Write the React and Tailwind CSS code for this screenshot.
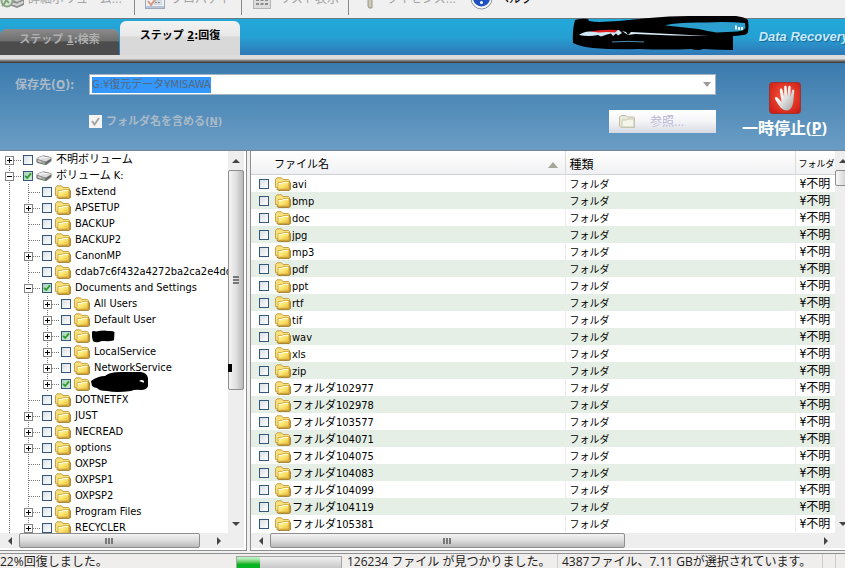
import { useState } from "react";

const tree = [
  { name: "不明ボリューム", level: 0, icon: "drive", node: "plus" },
  { name: "ボリューム K:", level: 0, icon: "drive", node: "minus", checked: true },
  { name: "$Extend", level: 1 },
  { name: "APSETUP", level: 1, node: "plus" },
  { name: "BACKUP", level: 1 },
  { name: "BACKUP2", level: 1 },
  { name: "CanonMP", level: 1, node: "plus" },
  { name: "cdab7c6f432a4272ba2ca2e4dd6", level: 1 },
  { name: "Documents and Settings", level: 1, node: "minus", checked: true },
  { name: "All Users", level: 2, node: "plus" },
  { name: "Default User", level: 2, node: "plus" },
  { hidden: "short", level: 2, node: "plus", checked: true },
  { name: "LocalService", level: 2, node: "plus" },
  { name: "NetworkService", level: 2, node: "plus" },
  { hidden: "long", level: 2, node: "plus", checked: true },
  { name: "DOTNETFX", level: 1 },
  { name: "JUST", level: 1, node: "plus" },
  { name: "NECREAD", level: 1, node: "plus" },
  { name: "options", level: 1, node: "plus" },
  { name: "OXPSP", level: 1 },
  { name: "OXPSP1", level: 1 },
  { name: "OXPSP2", level: 1 },
  { name: "Program Files", level: 1, node: "plus" },
  { name: "RECYCLER", level: 1, node: "plus" },
];

const files = [
  "avi", "bmp", "doc", "jpg", "mp3", "pdf", "ppt", "rtf", "tif", "wav", "xls", "zip",
  "フォルダ102977", "フォルダ102978", "フォルダ103577", "フォルダ104071", "フォルダ104075",
  "フォルダ104083", "フォルダ104099", "フォルダ104119", "フォルダ105381",
];

function FolderIcon() {
  return (
    <svg width="16" height="14" viewBox="0 0 16 14" className="shrink-0">
      <defs>
        <linearGradient id="folder" x1="0" y1="0" x2="1" y2="1">
          <stop offset="0" stopColor="#fffbc0" />
          <stop offset="0.5" stopColor="#fbe671" />
          <stop offset="1" stopColor="#e6b83a" />
        </linearGradient>
      </defs>
      <path d="M0.5 10.5V2.5L2 0.8h4.5L8 2.5h5.5l1 1V12z" fill="#f8e07c" stroke="#c39a3c" strokeWidth="0.9" />
      <path d="M14.5 4.5l1 1.5v6.5l-1.5 1H3.5l-2-1.5" fill="#c4962a" stroke="#94701c" strokeWidth="0.7" />
      <path d="M3 12.2V5.5h4l1-1h6v7.7z" fill="url(#folder)" stroke="#cfa53c" strokeWidth="0.8" />
      <path d="M4 6.5h3.5l1-1h4.7" fill="none" stroke="#fffde0" />
    </svg>
  );
}

function DriveIcon() {
  return (
    <svg width="16" height="12" viewBox="0 0 16 12" className="shrink-0">
      <path d="M0.5 5q0-1 1-1.5L6 1.8q1-0.5 2-0.3l6.5 1.5q1 0.3 1 1.2v2q0 1-1 1.5l-3.5 2.8q-1 0.7-2 0.5L1.5 9q-1-0.3-1-1z" fill="#6c6c6c" />
      <path d="M0.8 4.8Q1 4 2 3.6L6.5 1.9l8 1.7q1 0.4 0.3 1L10.5 7.3q-0.8 0.4-1.5 0.2z" fill="#dcdcdc" />
      <path d="M0.8 5.2v2.6l8.4 2.7V7.7z" fill="#969696" />
      <path d="M2 6.8l3.5 1.2" stroke="#eeeeee" />
      <path d="M3.5 4.6l4-1.5 4 0.8" stroke="#fff" fill="none" />
      <circle cx="7.6" cy="8.9" r="0.7" fill="#8fdc8f" />
    </svg>
  );
}

function Check({ id, label, checked }) {
  return (
    <span className="relative flex h-[10px] w-[10px] shrink-0">
      <input
        id={id}
        type="checkbox"
        aria-label={label}
        defaultChecked={checked}
        className="peer h-[10px] w-[10px] appearance-none border border-[#34587c] bg-linear-to-br from-[#d9dfe4] to-white checked:from-[#a9d4b4] checked:to-[#cfe9d4]"
      />
      <svg viewBox="0 0 10 10" className="pointer-events-none absolute inset-0 hidden h-[10px] w-[10px] peer-checked:block">
        <path d="M2.2 4.8L4.2 7l3.8-4.6" fill="none" stroke="#2a9a2e" strokeWidth="1.8" />
      </svg>
    </span>
  );
}

function Guide() {
  return (
    <svg width="19" height="16" className="shrink-0">
      <path d="M9.5 0v16" stroke="#777" strokeDasharray="1 1" />
    </svg>
  );
}

function Connector({ node, first }) {
  return (
    <svg width="19" height="16" className="shrink-0 overflow-visible">
      <path d={first ? "M9.5 8v8" : "M9.5 0v16"} stroke="#777" strokeDasharray="1 1" />
      <path d="M10 8.5h11" stroke="#777" strokeDasharray="1 1" />
      {node && (
        <>
          <rect x="5.5" y="4.5" width="8" height="8" fill="#fff" stroke="#848484" />
          <path d={node === "plus" ? "M7 8.5h5M9.5 6v5" : "M7 8.5h5"} stroke="#000" />
        </>
      )}
    </svg>
  );
}

function Blot({ kind }) {
  if (kind === "short") {
    return (
      <svg width="26" height="14" className="-ml-1 shrink-0">
        <path d="M2 2.5q2-1 4 0q8-1.5 12-0.5q5-0.5 6.5 1l-0.5 8q-1 1.5-10 1q-4 0-5 1q-3 0.8-6-0.8q-1.5-4-1-9.7z" fill="#000" />
      </svg>
    );
  }
  return (
    <svg width="60" height="22" className="relative -top-[2px] -ml-1 shrink-0">
      <path d="M1 10q7-5 14-5q4-4 16-4h20q6 1 7 6v8q-1 4-7 4q-6-1-10 1q-15 2-24 0q-8 0-10-3q-2 0-5-2z" fill="#000" />
      <path d="M49 10q3-2 5 0q0 3-2 1z" fill="#fff" />
    </svg>
  );
}

function TreeRow({ item, index }) {
  const id = `tree-${index}`;
  return (
    <li className="flex h-4 items-center">
      {Array.from({ length: item.level }).map((_, i) => (
        <Guide key={i} />
      ))}
      <Connector node={item.node} first={index === 0} />
      <span className="ml-1 flex items-center gap-[3px]">
        <Check id={id} label={item.name ? undefined : "フォルダ"} checked={item.checked} />
        {item.icon === "drive" ? <DriveIcon /> : <FolderIcon />}
      </span>
      <label htmlFor={id} className="ml-1 flex items-center whitespace-nowrap">
        {item.hidden ? <Blot kind={item.hidden} /> : item.name}
      </label>
    </li>
  );
}

function Arrow({ dir }) {
  const paths = {
    up: "M4 2l4 4H0z",
    down: "M0 2h8L4 6z",
    left: "M2 4l4-4v8z",
    right: "M6 4L2 0v8z",
  };
  return (
    <button type="button" aria-label={dir} className="flex h-[19px] w-full items-center justify-center">
      <svg width="8" height="8" viewBox="0 0 8 8">
        <path d={paths[dir]} fill="#444" />
      </svg>
    </button>
  );
}

function HScroll({ thumb }) {
  return (
    <div className="flex h-[15px] bg-[#eeeeee]">
      <div className="flex w-[19px] shrink-0 items-center overflow-hidden"><Arrow dir="left" /></div>
      <div className="flex-1">
        <div className={`flex h-[15px] items-center justify-center gap-px rounded-xs border border-[#8e8e8e] bg-linear-to-b from-[#f4f4f4] via-[#dcdcdc] to-[#b9b9b9] ${thumb}`}>
          <i className="h-[6px] w-[2px] bg-[#777]" />
          <i className="h-[6px] w-[2px] bg-[#777]" />
          <i className="h-[6px] w-[2px] bg-[#777]" />
        </div>
      </div>
      <div className="flex w-[19px] shrink-0 items-center overflow-hidden"><Arrow dir="right" /></div>
    </div>
  );
}

function ToolbarItem({ icon, text, enabled, className }) {
  return (
    <button type="button" disabled={!enabled} className={`flex shrink-0 items-center whitespace-nowrap text-xs ${enabled ? "text-black" : "text-[#a3a3a3]"} ${className}`}>
      {icon}
      {text}
    </button>
  );
}

function Toolbar() {
  return (
    <header className="flex h-[19px] items-end overflow-hidden border-b border-[#6d7a80] bg-[#f0f0f0]">
      <div className="flex h-[38px] shrink-0 items-center">
        <ToolbarItem
          className="w-[134px] gap-1"
          text="詳細ボリューム..."
          icon={
            <svg width="24" height="24" viewBox="0 0 24 24">
              <path d="M9 11l8-3 7 4v6l-7 3-8-3z" fill="#8f8f8f" />
              <path d="M10 11l7-2 6 3-6 3z" fill="#d2d2d2" />
              <path d="M11 16l6 2 6-3" stroke="#d8d8d8" strokeWidth="2" fill="none" />
              <circle cx="7" cy="14" r="5.5" fill="#dfe8dd" stroke="#8da488" strokeWidth="2" />
              <path d="M2 19q3-2 4-6l3 3" stroke="#7fa577" strokeWidth="2" fill="none" />
            </svg>
          }
        />
        <div className="h-8 w-px bg-[#8a8a8a]" />
        <ToolbarItem
          className="w-[106px] gap-[6px] pl-[10px]"
          text="プロパティ"
          icon={
            <svg width="20" height="22" viewBox="0 0 20 22">
              <rect x="0.5" y="0.5" width="19" height="20" fill="#eef0f6" stroke="#9fa8b8" />
              <path d="M1 18h18v2H1z" fill="#b7c4da" />
              <path d="M9 12h8v5H9z" fill="#d5d9e2" />
              <path d="M10 14.5h2M13 14.5h2" stroke="#8890a0" />
              <path d="M3 13l3 4 6-8" stroke="#d89a80" strokeWidth="2" fill="none" />
            </svg>
          }
        />
        <div className="h-8 w-px bg-[#8a8a8a]" />
        <ToolbarItem
          className="w-[106px] gap-2 pl-[11px]"
          text="リスト表示"
          icon={
            <svg width="18" height="22" viewBox="0 0 18 22">
              <rect x="0.5" y="0.5" width="17" height="20" fill="#dcdcdc" stroke="#b4b4b4" />
              <path d="M3 11h3v2H3zM7.5 11h3v2h-3zM12 11h3v2h-3zM3 15h3v2H3zM7.5 15h3v2h-3zM12 15h3v2h-3z" fill="#8c8c8c" />
            </svg>
          }
        />
        <div className="h-8 w-px bg-[#8a8a8a]" />
        <ToolbarItem
          className="w-[121px] gap-3 pl-[17px]"
          text="ライセンス..."
          icon={
            <svg width="8" height="22" viewBox="0 0 8 22">
              <circle cx="4" cy="4" r="3.5" fill="#ccc5b0" />
              <path d="M2 6h4v14H3l-1-2z" fill="#cfc9b8" stroke="#8b8678" strokeWidth="0.8" />
            </svg>
          }
        />
        <ToolbarItem
          className="gap-1"
          enabled
          text="ヘルプ"
          icon={
            <svg width="23" height="24" viewBox="0 0 23 24">
              <circle cx="11.5" cy="11.5" r="10.5" fill="#f6f8fc" stroke="#8d95a5" />
              <circle cx="11.5" cy="11" r="8.5" fill="#1f4fc0" />
              <circle cx="11.5" cy="15.5" r="1.5" fill="#fff" />
              <path d="M11.5 13v-2q3-2 2-4t-4 0" stroke="#fff" strokeWidth="2" fill="none" />
            </svg>
          }
        />
      </div>
    </header>
  );
}

function TabBand({ tab, setTab }) {
  return (
    <div className="flex h-9 items-end overflow-x-clip bg-linear-to-b from-[#22a8da] via-[#25a0d3] to-[#2f78b6]">
      <button
        type="button"
        onClick={() => setTab(1)}
        className="h-[26px] w-[119px] shrink-0 rounded-t-md bg-linear-to-b from-[#8b8b8b] from-0% via-[#6f6f6f] via-45% to-[#4c4c4c] to-50% pb-1 text-[11px] font-bold text-[#b0b0b0]"
      >
        ステップ <u>1</u>:検索
      </button>
      <button
        type="button"
        onClick={() => setTab(2)}
        aria-pressed={tab === 2}
        className="ml-px h-[34px] w-[120px] shrink-0 rounded-t-md bg-linear-to-b from-[#f2f2f2] from-0% via-[#e9e9e9] via-42% to-[#d9d9d9] to-48% pb-1 text-[11px] font-bold text-black"
      >
        ステップ <u>2</u>:回復
      </button>
      <svg width="178" height="40" viewBox="0 0 178 40" className="z-10 ml-auto shrink-0">
        <path
          d="M3 5q6-2 13-1l1 2q5 1 10 1q25-1 50-4q20-2 40-2h47q9 1 12 4q1 6 0 12q-1 3-5 3q-6 1-10 1v14q-15 0-30-1q-4 2-12 0q-25 1-52 0q-25 1-46-1q-12-1-20-5q-1-12 2-23z"
          fill="#000"
        />
        <path d="M94 10q12-3 40-2.5q20-1 39 0.5l0.5 5q-2 3-8 3.5l-21 1q-8-1-18-3.5q-16-2-32.5-3.5z" fill="#2ba0d0" />
        <path d="M164 10.5v4M167 12v3M170 12v3" stroke="#e8f6fc" strokeWidth="2" />
        <path d="M7 20q5-4 12-3.5l28-1.5 3 3-4 2.5-2-2-3 2.5-2-2.5-4 1-6 2-3-1.5q-9 2-19 0z" fill="#cfeaf6" />
        <path d="M18 16.5q12-2.5 28-1.5l-3 2.5-8-0.5-8 0.5z" fill="#e0201c" />
        <path d="M50 16l4 1 2 3 3-3 78 4-36-0.5-38-1.5-7 1z" fill="#d9eef8" />
        <path d="M40 27q16-1.3 32 0" stroke="#5fb0d8" strokeWidth="0.8" fill="none" />
      </svg>
      <span className="-mr-1 ml-[9px] flex h-9 shrink-0 items-center font-['Liberation_Sans',sans-serif] text-[13px] font-bold italic text-[#c5ebfc] text-shadow-[1px_1px_1px_#17659b]">
        Data Recovery
      </span>
    </div>
  );
}

function RecoveryPanel() {
  return (
    <form className="flex h-[87px] shrink-0 bg-linear-to-b from-[#3a7bae] to-[#6a9dc4] text-[11px]" onSubmit={(e) => e.preventDefault()}>
      <div className="min-w-0 flex-1 pt-[11px]">
        <div className="flex items-center">
          <label htmlFor="dest" className="w-[89px] shrink-0 pl-[15px] text-xs font-bold text-[#a9bac8]">
            保存先(<u>O</u>):
          </label>
          <div className="flex h-[21px] min-w-0 flex-1 items-center border border-[#a5b5c2] bg-white pl-[2px]">
            <input
              id="dest"
              defaultValue="G:¥復元データ¥MISAWA"
              className="h-4 bg-[#3397fb] leading-4 text-[#56687a] outline-none field-sizing-content"
            />
            <button type="button" aria-label="一覧" className="ml-auto flex h-full w-4 items-center justify-center">
              <svg width="8" height="5"><path d="M0 0h8L4 5z" fill="#9b9b9b" /></svg>
            </button>
          </div>
        </div>
        <div className="mt-[15px] flex items-center pl-[89px]">
          <span className="relative flex">
            <input id="names" type="checkbox" defaultChecked className="peer h-[13px] w-[13px] appearance-none bg-[#f4f4f4]" />
            <svg viewBox="0 0 13 13" className="pointer-events-none absolute inset-0 hidden peer-checked:block">
              <path d="M3 6l2.5 3.5L10 3" fill="none" stroke="#a5a5a5" strokeWidth="2" />
            </svg>
          </span>
          <label htmlFor="names" className="ml-1 pt-[2px] font-bold text-[#a9bac8]">
            フォルダ名を含める(<u>N</u>)
          </label>
          <button type="button" className="ml-auto flex h-[23px] w-[107px] items-center bg-linear-to-b from-white via-[#f5f5f8] to-[#d6dae2] pl-[10px] text-xs text-[#b9b9d6]">
            <svg width="17" height="14" viewBox="0 0 17 14" className="mr-[14px]">
              <path d="M0.5 11V2L2 0.5h5L8.5 2h6l1 1v9.5H2z" fill="#e9e9dc" stroke="#bdbda8" />
              <path d="M3 12V5h5l1-1h6v8z" fill="#f5f5ea" stroke="#c9c9b6" />
            </svg>
            参照...
          </button>
        </div>
      </div>
      <button type="button" className="flex w-[129px] shrink-0 flex-col items-center gap-1 pt-[19px] pl-2 font-['Open_Sans','Noto_Sans_CJK_JP',sans-serif] text-base leading-5 font-bold whitespace-nowrap text-white">
        <svg width="32" height="32" viewBox="0 0 32 32">
          <defs>
            <radialGradient id="stop" cx="0.5" cy="0.45" r="0.7">
              <stop offset="0" stopColor="#ff5a40" />
              <stop offset="1" stopColor="#c81a12" />
            </radialGradient>
            <linearGradient id="hand" x1="0" y1="0" x2="1" y2="1">
              <stop offset="0.3" stopColor="#ffffff" />
              <stop offset="1" stopColor="#a0a0a0" />
            </linearGradient>
          </defs>
          <rect x="0.5" y="0.5" width="31" height="31" rx="3" fill="url(#stop)" stroke="#9c3430" />
          <path
            d="M15 28q-4-2-6-6l-3-5q-0.6-1.6 0.8-2q1.5-0.2 2.7 1.5l3 3.5L10.8 8q-0.1-1.5 1.1-1.6t1.5 1.4L15.2 15V5.2q0-1.4 1.2-1.4t1.3 1.4l0.6 9.6 1-9.8q0.2-1.4 1.3-1.3t1.1 1.5L21.5 15.5l1.5-7q0.4-1.3 1.4-1t0.9 1.6l-1 10q-0.6 6-3.5 8.5q-3 1.5-5.8 0.4z"
            fill="url(#hand)"
          />
        </svg>
        <span>一時停止(<u>P</u>)</span>
      </button>
    </form>
  );
}

function FolderTree() {
  return (
    <nav className="flex w-[247px] shrink-0 flex-col border-r border-b border-[#8f8f8f] bg-white pr-[2px] pb-[2px]">
      <div className="flex min-h-0 flex-1">
        <ul className="min-w-0 flex-1 overflow-hidden pt-px">
          {tree.map((item, i) => (
            <TreeRow key={i} item={item} index={i} />
          ))}
        </ul>
        <div className="relative flex w-4 flex-col bg-[#eeeeee]">
          <Arrow dir="up" />
          <div className="flex-1">
            <div className="flex h-[64%] flex-col items-center justify-center gap-px rounded-xs border border-[#8e8e8e] bg-linear-to-r from-[#f4f4f4] via-[#e0e0e0] to-[#b9b9b9]">
              <i className="h-[2px] w-[6px] bg-[#777]" />
              <i className="h-[2px] w-[6px] bg-[#777]" />
              <i className="h-[2px] w-[6px] bg-[#777]" />
            </div>
          </div>
          <Arrow dir="down" />
          <div className="absolute top-[213px] left-0 h-2 w-[4px] bg-black" />
        </div>
      </div>
      <div className="flex">
        <div className="flex-1"><HScroll thumb="w-[95%]" /></div>
        <div className="w-4 bg-[#eeeeee]" />
      </div>
    </nav>
  );
}

function FileList() {
  return (
    <section className="flex min-w-0 flex-1 overflow-hidden border-b border-l border-[#8f8f8f] bg-white pb-[2px]">
      <div className="flex min-w-0 flex-1 flex-col">
        <div className="min-h-0 flex-1 overflow-hidden">
          <table className="w-full table-fixed border-collapse text-left">
            <colgroup>
              <col />
              <col className="w-[230px]" />
              <col className="w-[40px]" />
            </colgroup>
            <thead>
              <tr className="h-6 bg-linear-to-b from-white via-[#f8f8f9] to-[#eff0f2] shadow-[inset_0_-1px_0_#cfd2d5]">
                <th className="p-0 pt-1 pl-[23px] font-normal">
                  <span className="flex items-center justify-between pr-[7px]">
                    ファイル名
                    <svg width="10" height="6"><path d="M5 0l5 6H0z" fill="#a5a598" /></svg>
                  </span>
                </th>
                <th className="border-l border-[#dcdcdc] p-0 pt-1 pl-1 text-xs font-normal">種類</th>
                <th className="overflow-hidden border-l border-[#dcdcdc] p-0 pt-1 pl-[3px] text-[9px] font-normal whitespace-nowrap">フォルダ</th>
              </tr>
            </thead>
            <tbody>
              {files.map((name, i) => (
                <tr key={name} className="h-[17px] odd:bg-white even:bg-[#e5efe5]">
                  <td className="p-0 pl-2">
                    <span className="flex h-[17px] items-center">
                      <Check id={`file-${i}`} checked={false} />
                      <label htmlFor={`file-${i}`} className="ml-[6px] flex items-center gap-px">
                        <FolderIcon />
                        <span className="pt-[2px] leading-[15px]">{name}</span>
                      </label>
                    </span>
                  </td>
                  <td className="border-l border-[#ececec] p-0 pt-[2px] pl-1 text-[10px] leading-[15px]">フォルダ</td>
                  <td className="overflow-hidden border-l border-[#ececec] p-0 pt-[2px] pl-1 text-xs leading-[15px] whitespace-nowrap">¥不明</td>
                </tr>
              ))}
            </tbody>
          </table>
        </div>
        <HScroll thumb="w-[65%]" />
      </div>
      <div className="-mr-[6px] flex w-4 shrink-0 flex-col bg-[#eeeeee] pb-[15px]">
        <Arrow dir="up" />
        <div className="flex-1">
          <div className="h-4 rounded-xs border border-[#8e8e8e] bg-linear-to-r from-[#f8f8f8] to-[#c4c4c4]" />
        </div>
        <Arrow dir="down" />
      </div>
    </section>
  );
}

function StatusBar() {
  return (
    <footer className="flex h-[15px] shrink-0 border-t border-[#8f8f8f] bg-[#f0eeec] font-['Open_Sans','Noto_Sans_CJK_JP',sans-serif] text-xs leading-4 whitespace-nowrap text-[#222]">
      <div className="w-[236px] shrink-0">22%回復しました。</div>
      <div className="mt-[2px] h-4 w-[106px] shrink-0 border border-[#a5a5a5] bg-linear-to-b from-[#f0f0f0] to-[#bdbdbd]">
        <div className="h-full w-[22%] bg-linear-to-b from-[#b8f0bc] from-10% to-[#06b321] to-50%" />
      </div>
      <div className="w-[215px] shrink-0 pl-[5px]">126234 ファイル が見つかりました。</div>
      <div className="min-w-0 flex-1 border-l border-[#cccccc] pl-1">4387ファイル、7.11 GBが選択されています。</div>
      <div className="w-[13px] border-l border-[#cccccc]" />
      <div className="w-[10px] border-l border-[#cccccc]" />
    </footer>
  );
}

export default function App() {
  const [tab, setTab] = useState(2);

  return (
    <div className="flex h-screen flex-col overflow-hidden bg-[#f0f0f0] font-['DejaVu_Sans_Condensed','Noto_Sans_CJK_JP',sans-serif] text-black">
      <Toolbar />
      <TabBand tab={tab} setTab={setTab} />
      <div className="h-2 shrink-0 bg-linear-to-b from-[#dcdcdc] from-50% via-[#8a8a8a] via-65% to-[#333]" />
      <RecoveryPanel />
      <main className="flex min-h-0 flex-1 gap-[3px] border-t border-[#6f8798] pb-[2px] text-[11px]">
        <FolderTree />
        <FileList />
      </main>
      <StatusBar />
    </div>
  );
}
